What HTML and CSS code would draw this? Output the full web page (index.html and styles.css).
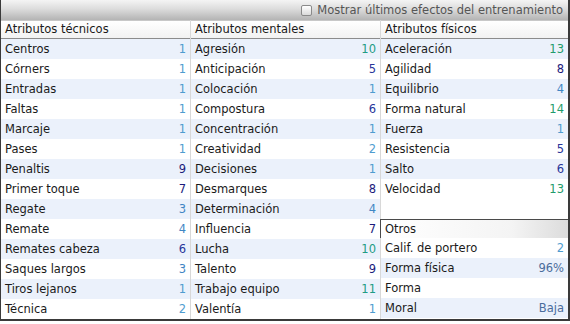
FILE: index.html
```html
<!DOCTYPE html>
<html>
<head>
<meta charset="utf-8">
<link rel="stylesheet" href="styles.css">
</head>
<body>
<div class="frame">
  <div class="topbar">
    <span class="check"></span>
    <span class="toplabel">Mostrar últimos efectos del entrenamiento</span>
  </div>
  <div class="cols">
    <div class="col">
      <div class="head">Atributos técnicos</div>
      <div class="row"><span>Centros</span><b class="v1">1</b></div>
      <div class="row"><span>Córners</span><b class="v1">1</b></div>
      <div class="row"><span>Entradas</span><b class="v1">1</b></div>
      <div class="row"><span>Faltas</span><b class="v1">1</b></div>
      <div class="row"><span>Marcaje</span><b class="v1">1</b></div>
      <div class="row"><span>Pases</span><b class="v1">1</b></div>
      <div class="row"><span>Penaltis</span><b class="v9">9</b></div>
      <div class="row"><span>Primer toque</span><b class="v7">7</b></div>
      <div class="row"><span>Regate</span><b class="v3">3</b></div>
      <div class="row"><span>Remate</span><b class="v4">4</b></div>
      <div class="row"><span>Remates cabeza</span><b class="v6">6</b></div>
      <div class="row"><span>Saques largos</span><b class="v3">3</b></div>
      <div class="row"><span>Tiros lejanos</span><b class="v1">1</b></div>
      <div class="row"><span>Técnica</span><b class="v2">2</b></div>
    </div>
    <div class="col">
      <div class="head">Atributos mentales</div>
      <div class="row"><span>Agresión</span><b class="v10">10</b></div>
      <div class="row"><span>Anticipación</span><b class="v5">5</b></div>
      <div class="row"><span>Colocación</span><b class="v1">1</b></div>
      <div class="row"><span>Compostura</span><b class="v6">6</b></div>
      <div class="row"><span>Concentración</span><b class="v1">1</b></div>
      <div class="row"><span>Creatividad</span><b class="v2">2</b></div>
      <div class="row"><span>Decisiones</span><b class="v1">1</b></div>
      <div class="row"><span>Desmarques</span><b class="v8">8</b></div>
      <div class="row"><span>Determinación</span><b class="v4">4</b></div>
      <div class="row"><span>Influencia</span><b class="v7">7</b></div>
      <div class="row"><span>Lucha</span><b class="v10">10</b></div>
      <div class="row"><span>Talento</span><b class="v9">9</b></div>
      <div class="row"><span>Trabajo equipo</span><b class="v11">11</b></div>
      <div class="row"><span>Valentía</span><b class="v1">1</b></div>
    </div>
    <div class="col last">
      <div class="head">Atributos físicos</div>
      <div class="row"><span>Aceleración</span><b class="v13">13</b></div>
      <div class="row"><span>Agilidad</span><b class="v8">8</b></div>
      <div class="row"><span>Equilibrio</span><b class="v4">4</b></div>
      <div class="row"><span>Forma natural</span><b class="v14">14</b></div>
      <div class="row"><span>Fuerza</span><b class="v1">1</b></div>
      <div class="row"><span>Resistencia</span><b class="v5">5</b></div>
      <div class="row"><span>Salto</span><b class="v6">6</b></div>
      <div class="row"><span>Velocidad</span><b class="v13">13</b></div>
      <div class="row blank"></div>
      <div class="subhead">Otros</div>
      <div class="row"><span>Calif. de portero</span><b class="v2">2</b></div>
      <div class="row"><span>Forma física</span><b class="txt">96%</b></div>
      <div class="row"><span>Forma</span><b class="txt"></b></div>
      <div class="row"><span>Moral</span><b class="txt">Baja</b></div>
    </div>
  </div>
</div>
</body>
</html>
```
FILE: styles.css
```css
html, body {
  margin: 0;
  padding: 0;
  background: #ffffff;
}
.frame {
  width: 567px;
  border-left: 1px solid #3a3a3a;
  border-right: 2px solid #3a3a3a;
  border-bottom: 2px solid #3a3a3a;
  font-family: "DejaVu Sans", Verdana, sans-serif;
  font-size: 11px;
  color: #1a1a1a;
}
.topbar {
  height: 20px;
  background: linear-gradient(#f4f4f4, #dcdcdc 45%, #b4b4b4);
  display: flex;
  align-items: center;
  justify-content: flex-end;
  padding-right: 5px;
  gap: 5px;
}
.check {
  width: 9px;
  height: 9px;
  border: 1px solid #8a8a8a;
  border-radius: 2px;
  background: linear-gradient(#ffffff, #dadada);
}
.toplabel {
  color: #555555;
  font-size: 11.5px;
}
.cols {
  display: grid;
  grid-template-columns: 190px 190px 187px;
}
.col {
  display: flex;
  flex-direction: column;
  border-right: 1px solid #d8d8d8;
}
.col.last {
  border-right: none;
}
.head {
  height: 17px;
  line-height: 17px;
  padding-left: 4px;
  background: linear-gradient(#ffffff, #f2f2f2);
  border-bottom: 1px solid #8c8c8c;
  border-top: 1px solid #c8c8c8;
  font-size: 11.5px;
}
.row {
  height: 20px;
  display: flex;
  align-items: center;
  justify-content: space-between;
  padding: 0 4px 0 4px;
  font-size: 11.5px;
}
.col .row:nth-child(even) {
  background: #ebf1fb;
}
.row.blank {
  background: #ffffff !important;
}
.subhead {
  height: 18px;
  line-height: 18px;
  padding-left: 4px;
  border-top: 1px solid #4a4a4a;
  border-left: 1px solid #4a4a4a;
  background: linear-gradient(90deg, #ffffff, #f4f4f4 70%, #dcdcdc);
  font-size: 11.5px;
  margin-left: -1px;
}
.col.last .subhead ~ .row:nth-child(odd) {
  background: #ebf1fb;
}
.col.last .subhead ~ .row:nth-child(even) {
  background: #ffffff;
}
.row b {
  font-weight: normal;
}
.v1, .v2 { color: #4f9ccf; }
.v3, .v4 { color: #3f86c4; }
.v5, .v6 { color: #27359a; }
.v7, .v8, .v9 { color: #1c1c7c; }
.v10, .v11 { color: #1f9c84; }
.v13, .v14 { color: #1f9c6c; }
.txt { color: #4a6c9c; }
```
